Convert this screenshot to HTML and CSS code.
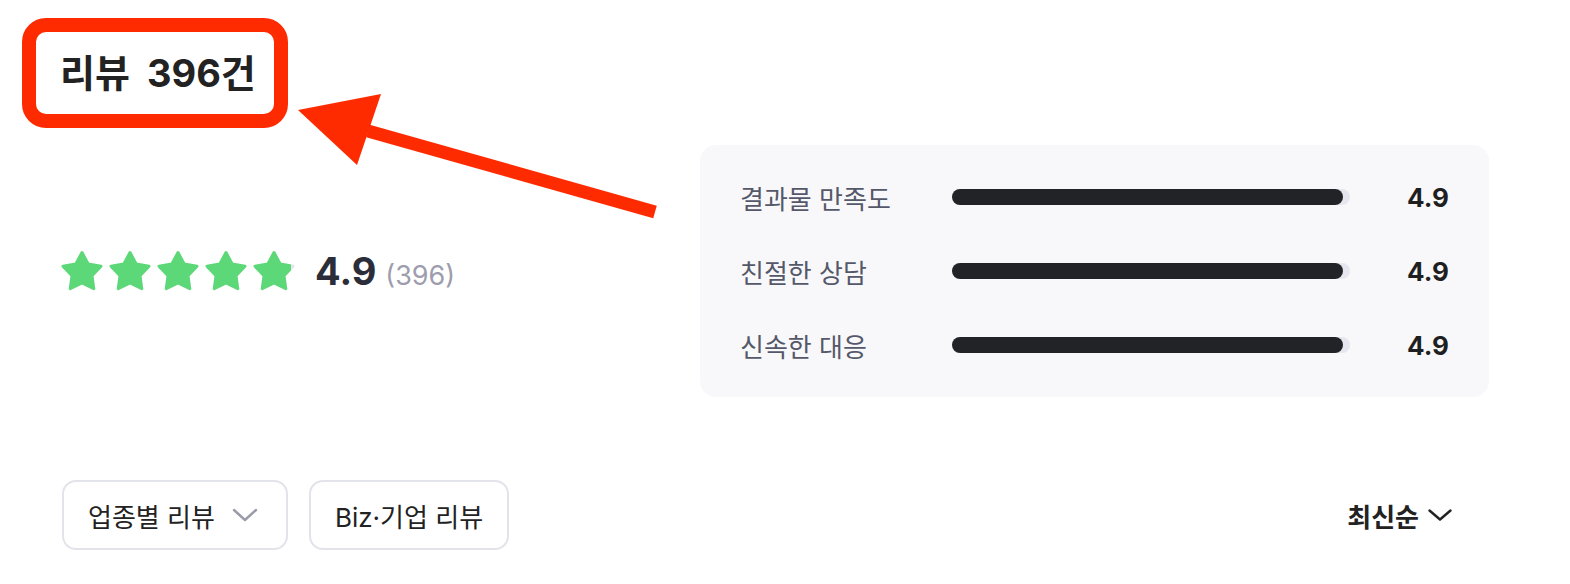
FILE: index.html
```html
<!DOCTYPE html>
<html lang="ko">
<head>
    <meta charset="UTF-8">
    <meta name="viewport" content="width=device-width, initial-scale=1.0">
    <title>리뷰</title>
    <link rel="stylesheet" href="styles.css">
</head>
<body>
    <div class="page">
        <div class="head">
            <h2 class="title">리뷰 396건</h2>
        </div>

        <!-- annotation arrow pointing at the title -->
        <svg class="arrow" width="700" height="240" viewBox="0 0 700 240">
            <line x1="655" y1="212" x2="368" y2="131" stroke="#ff2b00" stroke-width="13"/>
            <polygon points="298,110 381,94 357,165" fill="#ff2b00"/>
        </svg>

        <div class="summary">
            <div class="rating">
                <svg width="0" height="0" class="defs">
                    <defs>
                        <linearGradient id="partial" x1="0" x2="1" y1="0" y2="0">
                            <stop offset="0.955" stop-color="#5dd879"/>
                            <stop offset="0.955" stop-color="#e4e4ea"/>
                        </linearGradient>
                    </defs>
                </svg>
                <div class="stars">
                    <svg class="star" width="44" height="42" viewBox="0 0 44 42"><polygon points="22,2.5 28.17,14.01 41.02,16.32 31.99,25.74 33.76,38.68 22,33 10.24,38.68 12.01,25.74 2.98,16.32 15.83,14.01"/></svg>
                    <svg class="star" width="44" height="42" viewBox="0 0 44 42"><polygon points="22,2.5 28.17,14.01 41.02,16.32 31.99,25.74 33.76,38.68 22,33 10.24,38.68 12.01,25.74 2.98,16.32 15.83,14.01"/></svg>
                    <svg class="star" width="44" height="42" viewBox="0 0 44 42"><polygon points="22,2.5 28.17,14.01 41.02,16.32 31.99,25.74 33.76,38.68 22,33 10.24,38.68 12.01,25.74 2.98,16.32 15.83,14.01"/></svg>
                    <svg class="star" width="44" height="42" viewBox="0 0 44 42"><polygon points="22,2.5 28.17,14.01 41.02,16.32 31.99,25.74 33.76,38.68 22,33 10.24,38.68 12.01,25.74 2.98,16.32 15.83,14.01"/></svg>
                    <svg class="star star-part" width="44" height="42" viewBox="0 0 44 42"><polygon points="22,2.5 28.17,14.01 41.02,16.32 31.99,25.74 33.76,38.68 22,33 10.24,38.68 12.01,25.74 2.98,16.32 15.83,14.01"/></svg>
                </div>
                <div class="total">
                    <span class="score">4.9</span>
                    <span class="count">(396)</span>
                </div>
            </div>

            <div class="scores">
                <div class="score-row">
                    <span class="label">결과물 만족도</span>
                    <div class="bar"><div class="fill" style="width: 98.2%"></div></div>
                    <span class="value">4.9</span>
                </div>
                <div class="score-row">
                    <span class="label">친절한 상담</span>
                    <div class="bar"><div class="fill" style="width: 98.2%"></div></div>
                    <span class="value">4.9</span>
                </div>
                <div class="score-row">
                    <span class="label">신속한 대응</span>
                    <div class="bar"><div class="fill" style="width: 98.2%"></div></div>
                    <span class="value">4.9</span>
                </div>
            </div>
        </div>

        <div class="filters">
            <div class="chips">
                <button class="chip chip-drop">업종별 리뷰
                    <svg width="26" height="14" viewBox="0 0 26 14"><polyline points="2,2 13,12 24,2" fill="none" stroke="#9a9aa8" stroke-width="2.4" stroke-linecap="round" stroke-linejoin="round"/></svg>
                </button>
                <button class="chip">Biz·기업 리뷰</button>
            </div>
            <button class="sort">최신순
                <svg width="24" height="12" viewBox="0 0 24 12"><polyline points="1.5,1.5 12,10.5 22.5,1.5" fill="none" stroke="#222" stroke-width="2.4" stroke-linecap="round" stroke-linejoin="round"/></svg>
            </button>
        </div>
    </div>
</body>
</html>
```

FILE: styles.css
```css
body {
    margin: 0;
    font-family: Inter, "Noto Sans CJK KR", sans-serif;
    color: #222;
    background: #fff;
}

.page {
    position: relative;
    width: 1570px;
    height: 584px;
}

.head {
    padding: 18px 0 0 22px;
}

.title {
    display: inline-block;
    margin: 0;
    height: 82px;
    line-height: 82px;
    padding: 0 18px 0 24px;
    border: 14px solid #ff2b00;
    border-radius: 24px;
    font-size: 38px;
    font-weight: 700;
    word-spacing: 8px;
    color: #222;
}

.arrow {
    position: absolute;
    left: 0;
    top: 0;
    pointer-events: none;
}

.defs {
    position: absolute;
}

.summary {
    display: flex;
    margin-top: 17px;
    padding-left: 60px;
}

.rating {
    flex: 0 0 640px;
    display: flex;
    align-items: center;
}

.stars {
    display: flex;
    gap: 4px;
}

.star {
    display: block;
}

.star polygon {
    fill: #5dd879;
    stroke: #5dd879;
    stroke-width: 3;
    stroke-linejoin: round;
}

.star-part polygon {
    fill: url(#partial);
    stroke: url(#partial);
}

.total {
    display: flex;
    align-items: baseline;
    margin-left: 19px;
}

.score {
    font-size: 38px;
    font-weight: 700;
    color: #2b2e38;
}

.count {
    margin-left: 9px;
    font-size: 27px;
    color: #9d9dae;
}

.scores {
    width: 789px;
    box-sizing: border-box;
    padding: 37px 40px 37px 40px;
    background: #f8f8fb;
    border-radius: 16px;
    display: flex;
    flex-direction: column;
    gap: 44px;
}

.score-row {
    display: flex;
    align-items: center;
    height: 30px;
}

.label {
    width: 212px;
    font-size: 26px;
    color: #555869;
}

.bar {
    width: 398px;
    height: 16px;
    border-radius: 8px;
    background: #e6e6ee;
}

.fill {
    height: 100%;
    border-radius: 8px;
    background: #222326;
}

.value {
    flex: 1;
    text-align: right;
    font-size: 26px;
    font-weight: 700;
    color: #1f1f22;
}

.filters {
    display: flex;
    justify-content: space-between;
    align-items: center;
    margin-top: 83px;
    padding: 0 118px 0 62px;
}

.chips {
    display: flex;
    gap: 21px;
}

.chip {
    display: inline-flex;
    align-items: center;
    gap: 17px;
    height: 70px;
    box-sizing: border-box;
    padding: 0 24px;
    border: 2px solid #e3e3ea;
    border-radius: 14px;
    background: #fff;
    font-family: inherit;
    font-size: 26px;
    color: #222;
    cursor: pointer;
}

.chip-drop {
    padding-right: 28px;
}

.sort {
    display: inline-flex;
    align-items: center;
    gap: 9px;
    padding: 0;
    border: none;
    background: none;
    font-family: inherit;
    font-size: 26px;
    font-weight: 600;
    color: #222;
    cursor: pointer;
}
```
